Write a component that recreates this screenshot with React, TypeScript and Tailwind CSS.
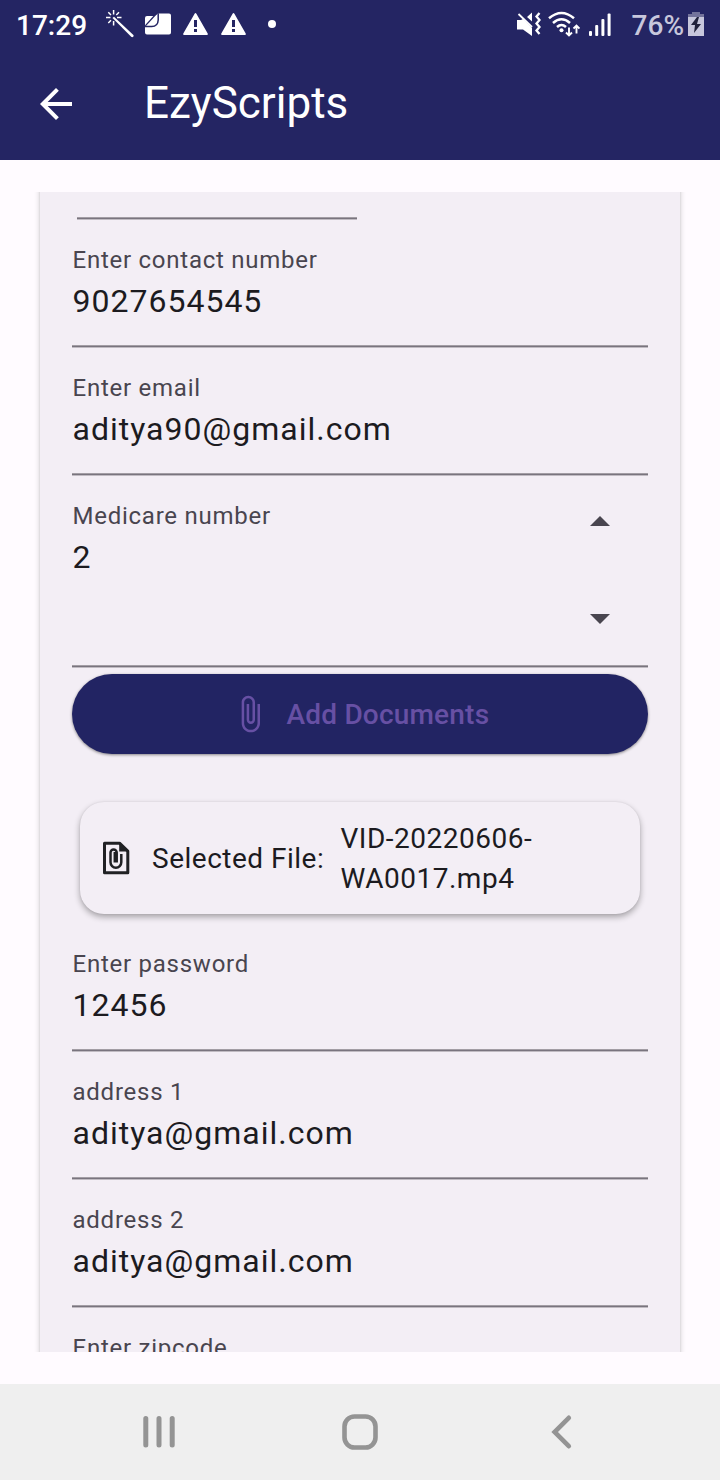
import React from "react";
import { MdArrowBack, MdAttachFile, MdArrowDropUp, MdArrowDropDown } from "react-icons/md";

function Rule() {
  return <div className="h-[3px] w-full border-t border-b border-t-[#a29da4] border-b-[#c0bbc2] bg-[#79747e]" />;
}

function Field({ label, value }: { label: string; value: string }) {
  return (
    <div className="flex h-32 flex-col">
      <FieldText label={label} value={value} />
      <div className="flex-1" />
      <Rule />
    </div>
  );
}

function FieldText({ label, value }: { label: string; value: string }) {
  return (
    <div className="flex flex-col pt-[25px] pl-[0.5px]">
      <span className="text-[24px] leading-[30px] tracking-[0.75px] text-[#49454f]">{label}</span>
      <span className="mt-[5px] text-[32px] leading-[42px] tracking-[1px] text-[#1c1b1f]">{value}</span>
    </div>
  );
}

function Warning() {
  return (
    <svg className="h-[22px] w-[25px]" viewBox="0 0 25 22">
      <path fill="#fff" fillRule="evenodd" d="M12.5 0Q13 0 13.4.8L24.7 20.5Q25.2 22 24 22H1Q-.2 22 .3 20.5L11.6.8Q12 0 12.5 0ZM11 7v7h3V7Zm0 9v3h3v-3Z" />
    </svg>
  );
}

function StatusBar() {
  return (
    <div className="flex h-12 items-center text-white">
      <span className="ml-4 w-[90px] pt-[3px] text-[28px] font-medium leading-[45px]">17:29</span>
      <svg className="h-7 w-7" viewBox="0 0 28 28" fill="none" stroke="#fff">
        <path strokeWidth="1.5" d="M7.6 0v4.5M7.6 11v4.5M0 7.6h4.5M11 7.6h4.5M2.3 2.3l2.7 2.7M13 2.3l-2.7 2.7M2.3 13l2.7-2.7" />
        <path fill="#fff" stroke="none" d="m6.5 8 1.5-1.2L27.4 25c.8 1.5-.8 2.8-2.2 1.8Z" />
      </svg>
      <svg className="ml-[11px] h-[22px] w-[26px]" viewBox="0 0 26 22" fill="none">
        <path fill="#fff" d="M13 .5h11q2 0 2 2V19.500q0 2-2 2H2q-2 0-2-2V5q0-2 2-2h7.500Z" />
        <path stroke="#242563" strokeWidth="1.3" d="M.3 12.800 11.500.5" />
        <path stroke="#242563" strokeWidth="1.5" d="M13.200.3V7q-.3 6.500-6.500 6.500H0" />
      </svg>
      <div className="ml-3"><Warning /></div>
      <div className="ml-[13px]"><Warning /></div>
      <span className="ml-[22px] h-2 w-2 rounded-full bg-white" />
      <div className="flex-1" />
      <svg className="h-[26px] w-[24px]" viewBox="0 0 24 26" fill="none" stroke="#fff">
        <path fill="#fff" stroke="none" d="M0 9h4l2-1L15 17v8L6 18.500H0ZM10 6l5-4.500v9Z" />
        <path strokeWidth="1.8" d="m1.500 3 13.500 13" />
        <path strokeWidth="2.300" d="m22.500 2-3 3.500 3 3.500-3 3.500 3 3.500-3 3.500 3 3.500" />
      </svg>
      <svg className="ml-[7px] h-[26px] w-8" viewBox="0 0 32 26" fill="none" stroke="#fff">
        <path strokeWidth="2.500" d="M1 7.200q12.500-10.500 25 0M5 12q8.500-7.500 17 0M9 16q4.500-4 9 0" />
        <circle cx="13.500" cy="19.300" r="2" fill="#fff" stroke="none" />
        <path strokeWidth="1.900" d="M21 16.500v8m-3-3 3 3 3-3M28.500 22.500v-8m-3 3 3-3 3 3" />
      </svg>
      <svg className="ml-[9px] h-6 w-[22px]" viewBox="0 0 22 24" fill="#fff">
        <rect x="0" y="19" width="3" height="5" rx="1" />
        <rect x="6.200" y="13" width="3" height="11" rx="1" />
        <rect x="12.400" y="7" width="3" height="17" rx="1" />
        <rect x="18.600" y="1.500" width="3" height="22.500" rx="1" />
      </svg>
      <span className="ml-[20.500px] pt-[3px] text-[28px] font-medium leading-[45px] text-[#c7c7dc]">76%</span>
      <svg className="ml-1 mr-4 h-6 w-4" viewBox="0 0 16 24">
        <path fill="#73739b" d="M4 0h8v2h4v3H0V2h4Z" />
        <path fill="#c7c7dc" d="M0 5h16v19H0Z" />
        <path fill="#20213b" d="m9 5-6 8h4l-1 8 7-9H9l2-7Z" />
      </svg>
    </div>
  );
}

function FileIcon() {
  return (
    <svg className="h-[34px] w-[28px]" viewBox="0 0 28 34" fill="none" stroke="#202124">
      <path strokeWidth="3" strokeLinejoin="round" d="M2.500 2.200h15l8.300 8v21.500H2.500Z" />
      <path fill="#202124" stroke="none" d="M17.200 1 27 10.500H17.200Z" />
      <path strokeWidth="2.500" d="M19.300 13v8.300a5.400 5.400 0 0 1-10.800 0V11.500a3.100 3.100 0 0 1 6.200 0V21.500M12.800 11v10.500" />
    </svg>
  );
}

export default function App() {
  return (
    <div className="flex h-[1480px] w-[720px] flex-col overflow-hidden bg-[#fffbff] font-['Roboto',sans-serif]">
      <header className="flex h-40 flex-col bg-[#242563]">
        <StatusBar />
        <div className="flex h-28 items-center text-white">
          <MdArrowBack className="ml-8 size-12" />
          <h1 className="ml-16 pb-[2px] text-[44px] leading-[54px]">EzyScripts</h1>
        </div>
      </header>

      <main className="my-8 h-[1160px] overflow-hidden px-10">
        <div className="-mt-5 h-[1300px] bg-[#f3eef5] px-8 pt-5 shadow-[0_0_6px_rgba(0,0,0,0.2),0_0_2px_rgba(0,0,0,0.1)]">
          <div className="flex h-7 flex-col pt-[25px] pl-[5px]">
            <div className="w-[280px]"><Rule /></div>
          </div>
          <Field label="Enter contact number" value="9027654545" />
          <Field label="Enter email" value="aditya90@gmail.com" />
          <div className="flex h-48 flex-col">
            <div className="flex flex-1 justify-between">
              <FieldText label="Medicare number" value="2" />
              <div className="mr-6 flex flex-col items-center pt-[22px] text-[#49454f]">
                <MdArrowDropUp className="size-12" />
                <MdArrowDropDown className="mt-[48px] size-12" />
              </div>
            </div>
            <Rule />
          </div>
          <button className="mt-[6px] flex h-20 w-full items-center rounded-full bg-[#222463] pl-[158px] text-[#6750a4] shadow-[0_1px_3px_rgba(0,0,0,0.45)]">
            <MdAttachFile className="size-10" />
            <span className="ml-[16.500px] pt-[2px] text-[28px] font-medium tracking-[0.2px]">Add Documents</span>
          </button>
          <section className="mx-2 mt-12 flex h-28 items-center rounded-[24px] bg-[#f3eef5] pl-[22px] text-[28px] leading-10 tracking-[0.5px] text-[#1c1b1f] shadow-[0_3px_6px_rgba(0,0,0,0.32),0_0_2px_rgba(0,0,0,0.08)]">
            <FileIcon />
            <span className="ml-[22px] w-[188.500px] pt-[2px]">Selected File:</span>
            <span className="pt-[2px]">VID-20220606-<br />WA0017.mp4</span>
          </section>
          <div className="mt-[10px]">
            <Field label="Enter password" value="12456" />
            <Field label="address 1" value="aditya@gmail.com" />
            <Field label="address 2" value="aditya@gmail.com" />
            <Field label="Enter zipcode" value="" />
          </div>
        </div>
      </main>

      <nav className="flex h-24 items-center bg-[#efefef]">
        <svg className="ml-[142px] h-9 w-[34px]" viewBox="0 0 34 36" stroke="#949494" strokeWidth="5" strokeLinecap="round">
          <path d="M3.800 4.500v26.500M17 4.500v26.500M30.200 4.500v26.500" />
        </svg>
        <svg className="ml-[166px] size-9" viewBox="0 0 36 36" fill="none" stroke="#949494" strokeWidth="4.600">
          <rect x="2.500" y="2.500" width="31" height="31" rx="10" />
        </svg>
        <svg className="ml-[172px] h-9 w-6" viewBox="0 0 24 36" fill="none" stroke="#949494" strokeWidth="4.600" strokeLinecap="round">
          <path d="M18.800 3.800 4.600 18l14.200 14.200" />
        </svg>
      </nav>
    </div>
  );
}
